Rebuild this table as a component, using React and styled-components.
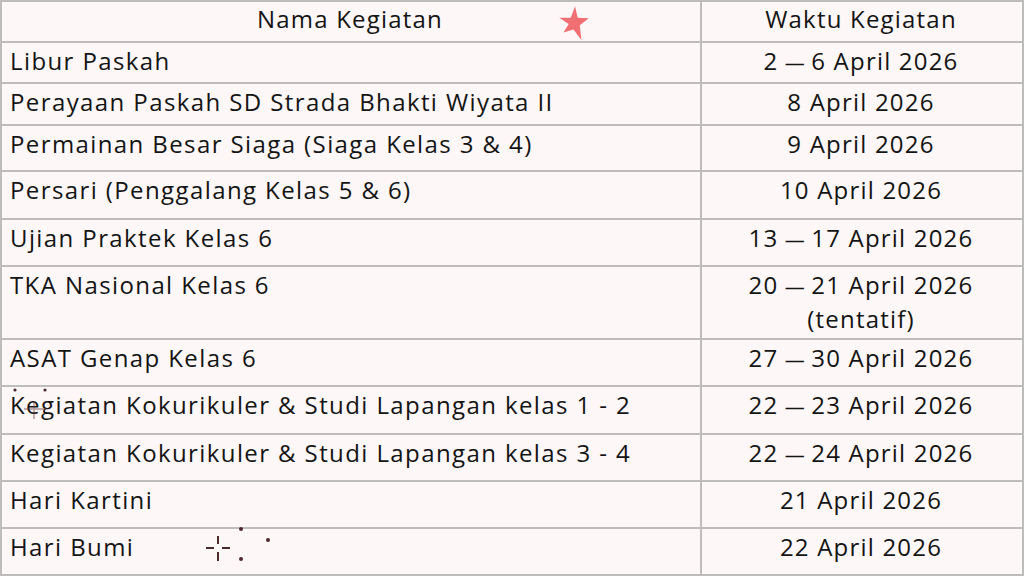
import React from 'react';
import styled, { createGlobalStyle } from 'styled-components';

const GlobalStyle = createGlobalStyle`
  html, body {
    margin: 0;
    padding: 0;
    background: #fdf7f7;
  }
  body {
    font-family: "Open Sans", "Noto Sans", sans-serif;
    color: #141414;
  }
`;

const Page = styled.div`
  position: relative;
  width: 1024px;
  height: 576px;
  overflow: hidden;
`;

const Table = styled.div`
  display: grid;
  grid-template-columns: 698px 320px;
  grid-template-rows: 39px 39px 40px 44px 46px 45px 71px 45px 46px 45px 45px 45px;
  gap: 2px;
  padding: 2px;
  width: 1022px;
  background: #bfbcbc;
`;

const Cell = styled.div`
  background: #fdf7f7;
  font-size: 24px;
  line-height: 32px;
  padding: ${p => (p.$head ? '1px 10px 0 8px' : '2px 10px 0 8px')};
  text-align: ${p => (p.$center ? 'center' : 'left')};
  white-space: ${p => (p.$multi ? 'pre-line' : 'nowrap')};
  letter-spacing: ${p => (p.$center ? '1.2px' : '1.4px')};
`;

const Dash = styled.span`
  display: inline-block;
  font-size: 20px;
  letter-spacing: 0;
  margin: 0 -1px;
`;

const Star = styled.svg`
  position: absolute;
  left: 557px;
  top: 3px;
  width: 34px;
  height: 38px;
`;

const Sparkle = styled.svg`
  position: absolute;
  left: ${p => p.$x}px;
  top: ${p => p.$y}px;
  width: 70px;
  height: 42px;
  pointer-events: none;
`;

const rows = [
  ['Libur Paskah', ['2', '6 April 2026']],
  ['Perayaan Paskah SD Strada Bhakti Wiyata II', ['8 April 2026']],
  ['Permainan Besar Siaga (Siaga Kelas 3 & 4)', ['9 April 2026']],
  ['Persari (Penggalang Kelas 5 & 6)', ['10 April 2026']],
  ['Ujian Praktek Kelas 6', ['13', '17 April 2026']],
  ['TKA Nasional Kelas 6', ['20', '21 April 2026\n(tentatif)']],
  ['ASAT Genap Kelas 6', ['27', '30 April 2026']],
  ['Kegiatan Kokurikuler & Studi Lapangan kelas 1 - 2', ['22', '23 April 2026']],
  ['Kegiatan Kokurikuler & Studi Lapangan kelas 3 - 4', ['22', '24 April 2026']],
  ['Hari Kartini', ['21 April 2026']],
  ['Hari Bumi', ['22 April 2026']],
];

function App() {
  return (
    <Page>
      <GlobalStyle />
      <Table>
        <Cell $head $center>Nama Kegiatan</Cell>
        <Cell $head $center>Waktu Kegiatan</Cell>
        {rows.map((r, i) => (
          <React.Fragment key={i}>
            <Cell>{r[0]}</Cell>
            <Cell $center $multi>
              {r[1].length > 1 ? (
                <>{r[1][0]} <Dash>—</Dash> {r[1][1]}</>
              ) : r[1][0]}
            </Cell>
          </React.Fragment>
        ))}
      </Table>

      <Star viewBox="0 0 32 36">
        <path d="M17 3 L19.5 14 L30 14.5 L21.5 21 L23 35 L15.5 25 L6 28 L11 20 L2 14 L13 14 Z" fill="#ef6f72" />
      </Star>

      <Sparkle $x={8} $y={383} viewBox="0 0 70 42">
        <circle cx="7" cy="7" r="1.6" fill="#4a2a2e" />
        <circle cx="37" cy="7" r="1.6" fill="#4a2a2e" />
        <path d="M26 18 V36 M16 26 H38" stroke="#6a4448" strokeWidth="1.4" opacity="0.55" />
      </Sparkle>

      <Sparkle $x={200} $y={520} viewBox="0 0 70 42">
        <path d="M18 16 V41 M6 28 H30" stroke="#4a2a2e" strokeWidth="2" />
        <rect x="16" y="24" width="4" height="8" fill="#fdf7f7" />
        <rect x="14" y="26" width="8" height="4" fill="#fdf7f7" />
        <circle cx="41" cy="9" r="2" fill="#4a2a2e" />
        <circle cx="68" cy="20" r="2" fill="#4a2a2e" />
        <circle cx="41" cy="39" r="2" fill="#4a2a2e" />
      </Sparkle>
    </Page>
  );
}

export default App;
